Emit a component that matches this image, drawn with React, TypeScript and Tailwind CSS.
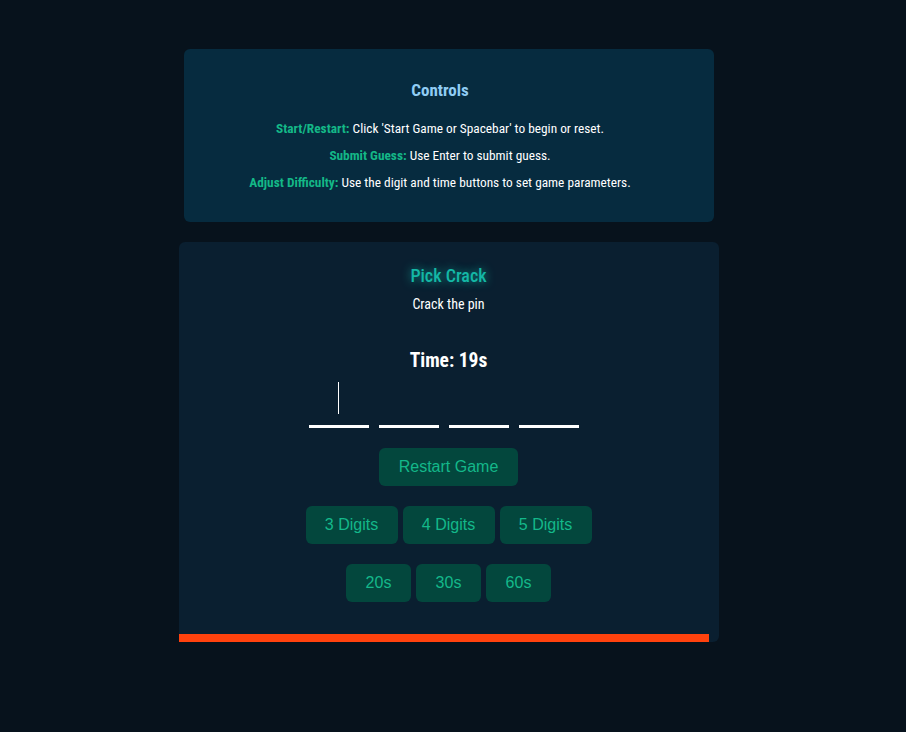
import { useState } from 'react'

const DIGIT_OPTIONS = [3, 4, 5]
const TIME_OPTIONS = [20, 30, 60]

export default function App() {
  const [digits, setDigits] = useState(4)
  const [, setDuration] = useState(20)
  const [timeLeft] = useState(19)

  return (
    <div className="min-h-screen w-full bg-[#07121c] pt-[49px] pr-[9px] font-['Roboto',sans-serif] font-stretch-condensed">
      <div className="mx-auto flex w-[540px] flex-col items-center">
        {/* Controls help */}
        <div className="w-[530px] rounded-md bg-[#062b3f] pt-[29px] pb-[30px] pr-[17px] text-center">
          <h2 className="mb-[15px] text-[17px] font-bold text-[#90cdf4]">Controls</h2>
          <div className="flex flex-col gap-[8px] text-[13.33px] leading-[19px] text-white">
            <p>
              <span className="font-bold text-[#14b887]">Start/Restart:</span> Click 'Start Game or Spacebar' to begin or reset.
            </p>
            <p>
              <span className="font-bold text-[#14b887]">Submit Guess:</span> Use Enter to submit guess.
            </p>
            <p>
              <span className="font-bold text-[#14b887]">Adjust Difficulty:</span> Use the digit and time buttons to set game parameters.
            </p>
          </div>
        </div>

        {/* Game card */}
        <div className="mt-[20px] flex w-[540px] flex-col items-center rounded-md bg-[#0a1f30] pt-[22px]">
          <h1 className="text-[18px] leading-[24px] font-medium text-[#14b8a6] [text-shadow:0_0_10px_rgba(20,184,166,0.8)]">
            Pick Crack
          </h1>
          <p className="mt-[8px] text-[14px] leading-[16px] font-normal text-white">Crack the pin</p>

          <p className="mt-[37px] text-[19.5px] leading-[24px] font-bold text-white">Time: {timeLeft}s</p>

          <div className="mt-[7px] flex">
            {Array.from({ length: digits }).map((_, i) => (
              <div key={i} className="mr-[10px] flex h-[48px] w-[60px] items-center justify-center border-b-[3px] border-white">
                {i === 0 && <div className="mb-[8px] h-[32px] w-px bg-white" />}
              </div>
            ))}
          </div>

          <button className="mt-[20px] h-[38px] rounded-md bg-[#03473d] px-[20px] font-['Liberation_Sans',sans-serif] text-[16px] text-[#14b88a]">
            Restart Game
          </button>

          <div className="mt-[20px] flex gap-[5px]">
            {DIGIT_OPTIONS.map(d => (
              <button
                key={d}
                onClick={() => setDigits(d)}
                className="h-[38px] w-[92px] rounded-md bg-[#03473d] font-['Liberation_Sans',sans-serif] text-[16px] text-[#14b88a]"
              >
                {d} Digits
              </button>
            ))}
          </div>

          <div className="mt-[20px] flex gap-[5px]">
            {TIME_OPTIONS.map(t => (
              <button
                key={t}
                onClick={() => setDuration(t)}
                className="h-[38px] w-[65px] rounded-md bg-[#03473d] font-['Liberation_Sans',sans-serif] text-[16px] text-[#14b88a]"
              >
                {t}s
              </button>
            ))}
          </div>

          {/* time bar */}
          <div className="mt-[32px] h-[8px] w-full">
            <div className="h-full w-[530px] bg-[#ff420e]" />
          </div>
        </div>
      </div>
    </div>
  )
}
